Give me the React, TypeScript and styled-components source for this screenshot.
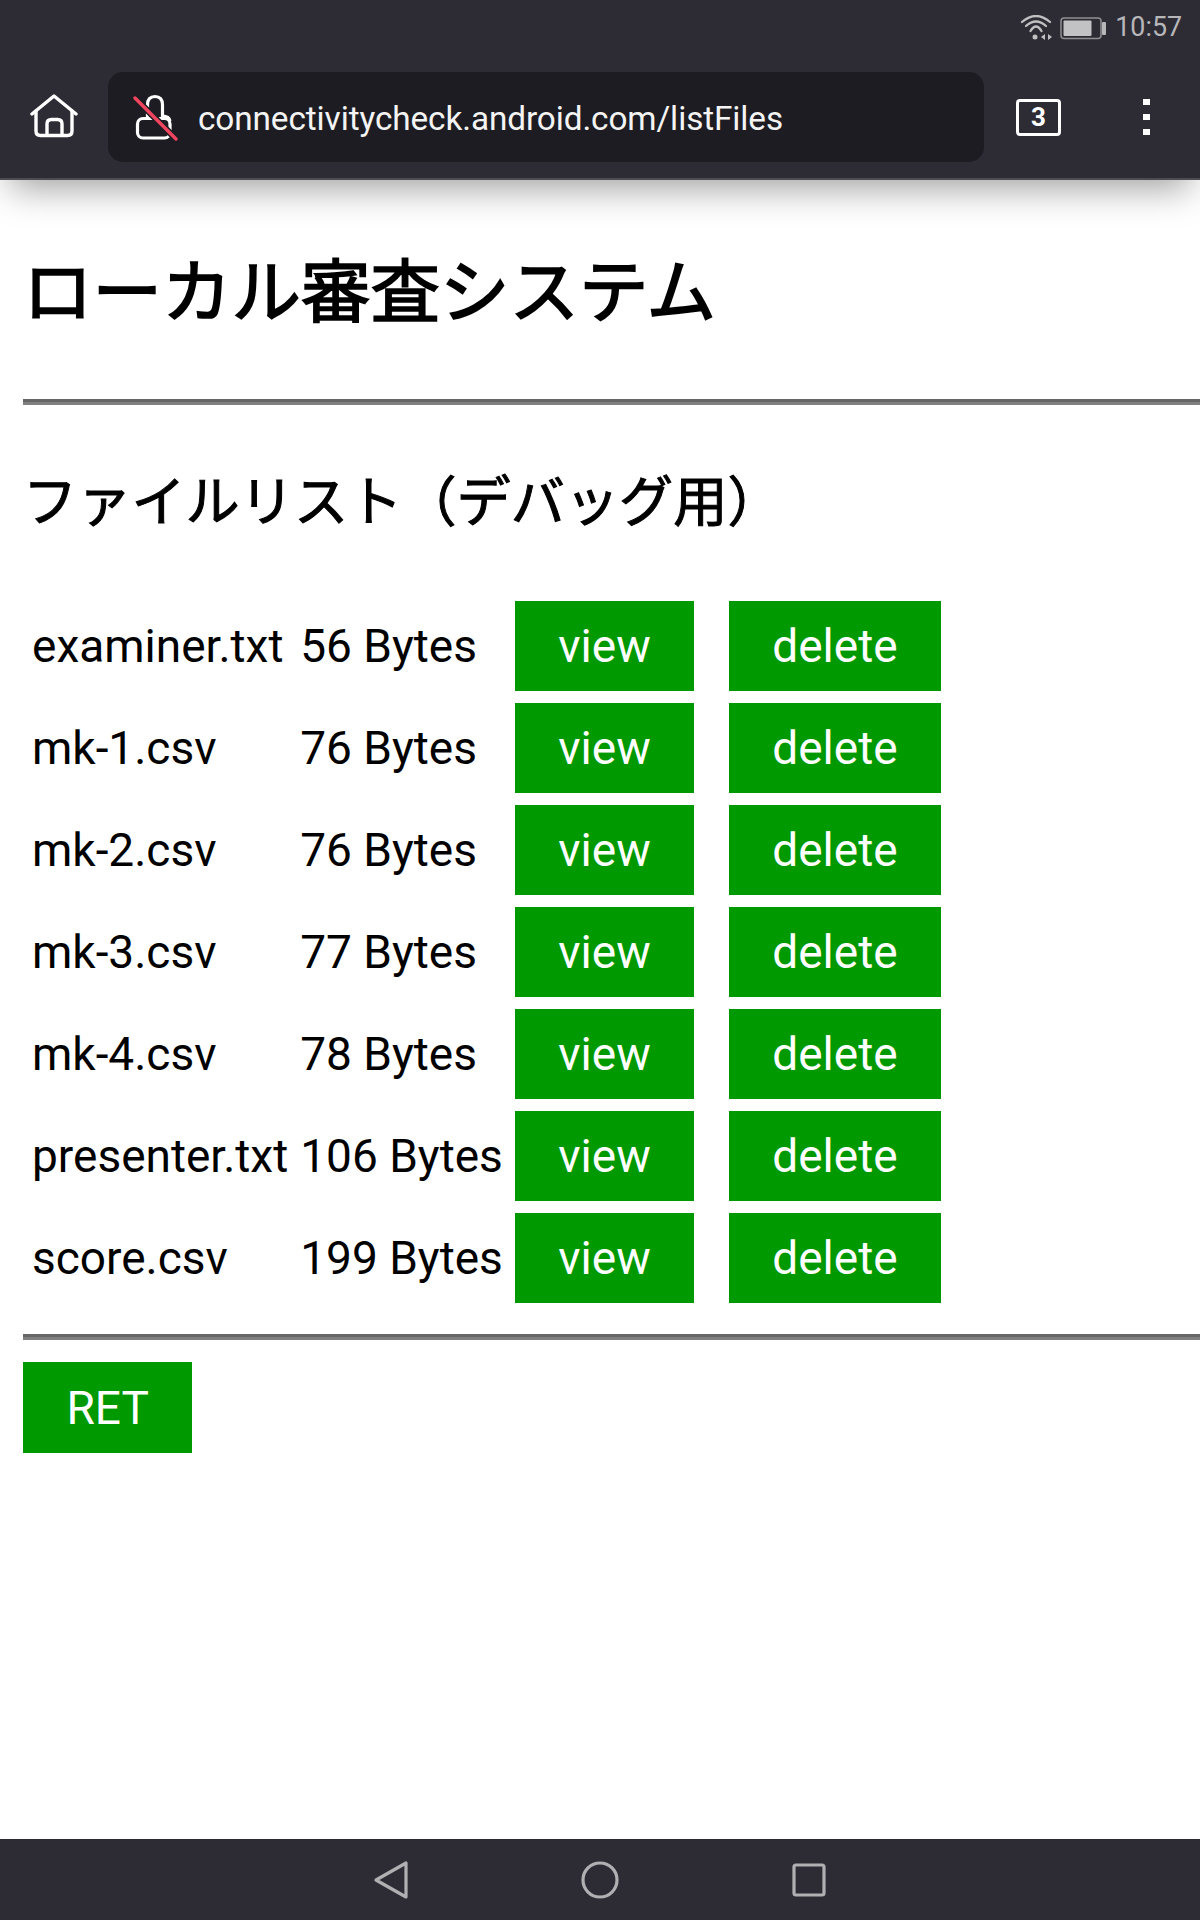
import React from "react";
import styled, { createGlobalStyle } from "styled-components";

const files = [
  { name: "examiner.txt", size: "56 Bytes" },
  { name: "mk-1.csv", size: "76 Bytes" },
  { name: "mk-2.csv", size: "76 Bytes" },
  { name: "mk-3.csv", size: "77 Bytes" },
  { name: "mk-4.csv", size: "78 Bytes" },
  { name: "presenter.txt", size: "106 Bytes" },
  { name: "score.csv", size: "199 Bytes" },
];

const GlobalStyle = createGlobalStyle`
  html, body {
    margin: 0;
    padding: 0;
    background: #fff;
  }
  body {
    font-family: Roboto, "Noto Sans CJK JP", sans-serif;
    color: #000;
  }
`;

const Page = styled.div`
  display: flex;
  flex-direction: column;
  width: 1200px;
  height: 1920px;
  overflow: hidden;
`;

const Chrome = styled.header`
  position: relative;
  z-index: 1;
  flex: none;
  height: 180px;
  box-sizing: border-box;
  background: #2d2c35;
  border-bottom: 2px solid #4d4c55;
  box-shadow: 0 18px 34px -10px rgba(0, 0, 0, 0.38);
`;

const StatusBar = styled.div`
  display: flex;
  justify-content: flex-end;
  align-items: center;
  height: 55px;
  padding-right: 18px;
`;

const StatusIcons = styled.svg`
  display: block;
  margin-right: 8px;
`;

const Clock = styled.span`
  font-size: 26.8px;
  line-height: 53px;
  color: #b7b7ba;
`;

const Toolbar = styled.div`
  display: flex;
  align-items: center;
  height: 90px;
  margin-top: 17px;
`;

const HomeButton = styled.svg`
  flex: none;
  display: block;
  margin: 0 30px;
`;

const AddressBar = styled.div`
  flex: none;
  display: flex;
  align-items: center;
  width: 876px;
  height: 90px;
  box-sizing: border-box;
  padding-left: 24px;
  border-radius: 15px;
  background: #1d1c22;
`;

const LockIcon = styled.svg`
  flex: none;
  display: block;
  margin-right: 18px;
`;

const Url = styled.span`
  margin-top: 2px;
  font-size: 33.35px;
  letter-spacing: -0.1px;
  color: #f4f4f4;
`;

const TabCount = styled.div`
  flex: none;
  display: flex;
  align-items: center;
  justify-content: center;
  box-sizing: border-box;
  width: 45px;
  height: 37px;
  margin-left: 32px;
  border: 3px solid #fff;
  border-radius: 4px;
  font-size: 26px;
  font-weight: 700;
  color: #fff;
`;

const MenuDots = styled.div`
  flex: none;
  display: flex;
  flex-direction: column;
  gap: 9px;
  margin-left: 82px;
`;

const MenuDot = styled.span`
  display: block;
  width: 7px;
  height: 6px;
  background: #fff;
`;

const Main = styled.main`
  flex: 1;
  padding-left: 23px;
`;

const Title = styled.h1`
  margin: 0;
  padding-top: 68px;
  font-size: 69.5px;
  line-height: 92px;
  font-weight: 400;
  -webkit-text-stroke: 1.7px #000;
`;

const Rule = styled.hr<{ $top: number }>`
  height: 0;
  margin: ${({ $top }) => $top}px 0 0;
  border: 0;
  border-top: 3px solid #666;
  border-bottom: 3px solid #808080;
`;

const Subtitle = styled.h2`
  margin: 49px 0 0;
  font-size: 54.2px;
  line-height: 98px;
  font-weight: 400;
  -webkit-text-stroke: 1px #000;
`;

const FileTable = styled.table`
  margin-top: 40px;
  border-collapse: separate;
  border-spacing: 6px;
  font-size: 46px;
`;

const Cell = styled.td`
  padding: 3px;
  white-space: nowrap;
  line-height: 54px;
`;

const Button = styled.button`
  display: block;
  height: 90px;
  box-sizing: border-box;
  padding: 0 43.5px;
  border: 0;
  border-radius: 0;
  background: #009900;
  color: #fff;
  font-family: Roboto, sans-serif;
  font-size: 46px;
`;

const RowButton = styled(Button)`
  margin-right: 22.5px;
`;

const ReturnButton = styled(Button)`
  height: 91px;
  margin-top: 22px;
`;

const NavBar = styled.nav`
  flex: none;
  display: flex;
  justify-content: center;
  align-items: center;
  gap: 171px;
  height: 81px;
  background: #2d2c35;
`;

const NavIcon = styled.svg`
  display: block;
`;

const App = () => {
  return (
    <Page>
      <GlobalStyle />
      <Chrome>
        <StatusBar>
          <StatusIcons width="88" height="26" viewBox="0 0 88 26" fill="none">
            <g stroke="#c0c0c3" strokeWidth="2.3" strokeLinecap="round">
              <path d="M3 7Q17 -5 31 7" />
              <path d="M7 11Q17 2 27 11" />
              <path d="M11.5 16Q17 7 22.5 16" />
            </g>
            <circle cx="16" cy="22" r="2.5" fill="#c0c0c3" />
            <path d="M26 19v6l-4-3zM29 19v6l4-3z" fill="#c0c0c3" />
            <rect x="42" y="3" width="40" height="20.5" rx="3" stroke="#8f8f93" strokeWidth="1.5" />
            <rect x="44.5" y="5.5" width="28" height="15.5" rx="1" fill="#c2c2c4" />
            <rect x="83" y="7" width="4" height="13" rx="1" fill="#b7b7ba" />
          </StatusIcons>
          <Clock>10:57</Clock>
        </StatusBar>
        <Toolbar>
          <HomeButton width="48" height="46" viewBox="0 0 48 46" fill="none" stroke="#fff" strokeWidth="3.4" strokeLinejoin="round" strokeLinecap="round">
            <path d="M2 20L24 2L46 20" />
            <path d="M6 17V37Q6 41.5 10.5 41.5H37.5Q42 41.5 42 37V17" />
            <path d="M17 41V30Q17 25.5 21.5 25.5H27.5Q32 25.5 32 30V41" />
          </HomeButton>
          <AddressBar>
            <LockIcon width="48" height="48" viewBox="0 0 48 48" fill="none">
              <path d="M15.5 25V12Q15.5 3.5 23 3.5Q30.5 3.5 30.5 12V23Q37 23 38 28" stroke="#fff" strokeWidth="3.2" />
              <rect x="5.5" y="25.5" width="32.5" height="19.5" rx="5.5" stroke="#fff" strokeWidth="3.2" />
              <path d="M3 5L44 46" stroke="#1d1c22" strokeWidth="6.5" />
              <path d="M3 5L44 46" stroke="#f0455f" strokeWidth="3.4" strokeLinecap="round" />
            </LockIcon>
            <Url>connectivitycheck.android.com/listFiles</Url>
          </AddressBar>
          <TabCount>3</TabCount>
          <MenuDots>
            <MenuDot />
            <MenuDot />
            <MenuDot />
          </MenuDots>
        </Toolbar>
      </Chrome>
      <Main>
        <Title>ローカル審査システム</Title>
        <Rule $top={59} />
        <Subtitle>ファイルリスト（デバッグ用）</Subtitle>
        <FileTable>
          <tbody>
            {files.map((file) => (
              <tr key={file.name}>
                <Cell>{file.name}</Cell>
                <Cell>{file.size}</Cell>
                <Cell>
                  <RowButton>view</RowButton>
                </Cell>
                <Cell>
                  <RowButton>delete</RowButton>
                </Cell>
              </tr>
            ))}
          </tbody>
        </FileTable>
        <Rule $top={22} />
        <ReturnButton>RET</ReturnButton>
      </Main>
      <NavBar>
        <NavIcon width="36" height="40" viewBox="0 0 36 40" fill="none" stroke="#b0b0b2" strokeWidth="3.2" strokeLinejoin="round">
          <path d="M3 20L33 3V37Z" />
        </NavIcon>
        <NavIcon width="40" height="40" viewBox="0 0 40 40" fill="none" stroke="#b0b0b2" strokeWidth="3.2">
          <circle cx="20" cy="20" r="17" />
        </NavIcon>
        <NavIcon width="36" height="36" viewBox="0 0 36 36" fill="none" stroke="#b0b0b2" strokeWidth="3.2" strokeLinejoin="round">
          <rect x="3" y="3" width="30" height="30" rx="2" />
        </NavIcon>
      </NavBar>
    </Page>
  );
};

export default App;
